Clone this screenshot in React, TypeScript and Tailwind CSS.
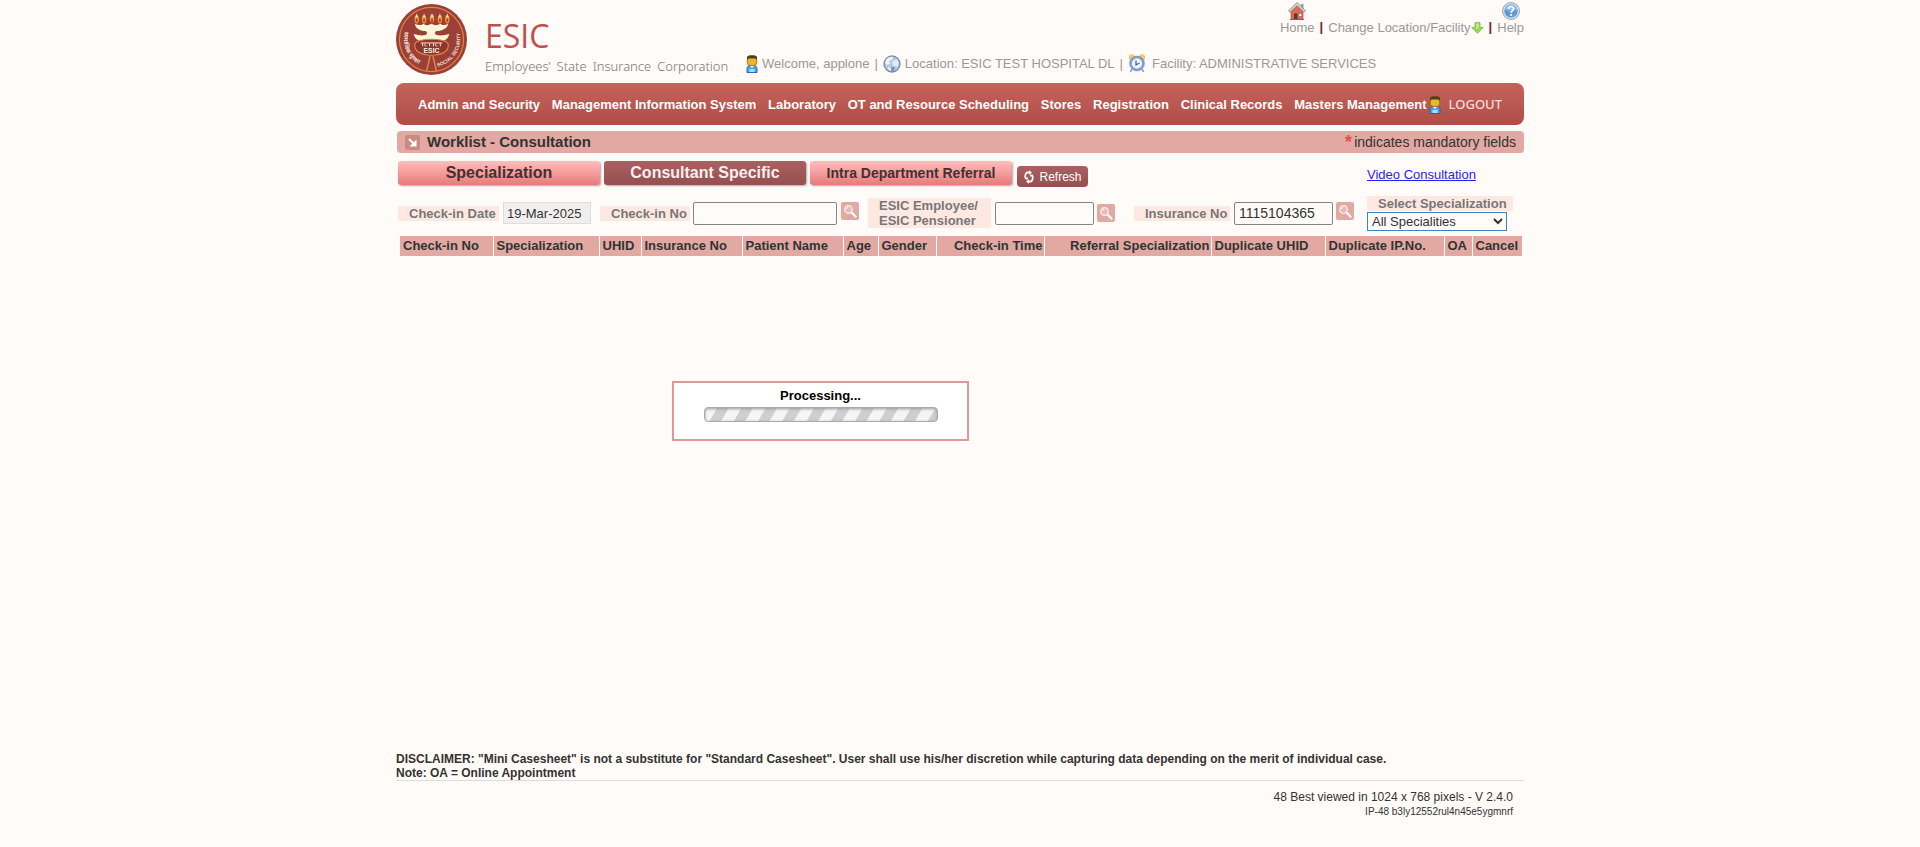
import React from "react";

const modules = [
  "Admin and Security",
  "Management Information System",
  "Laboratory",
  "OT and Resource Scheduling",
  "Stores",
  "Registration",
  "Clinical Records",
  "Masters Management",
];

const columns = [
  { label: "Check-in No", className: "w-[93px] text-left" },
  { label: "Specialization", className: "w-[106px] text-left" },
  { label: "UHID", className: "w-[42px] text-left" },
  { label: "Insurance No", className: "w-[101px] text-left" },
  { label: "Patient Name", className: "w-[101px] text-left" },
  { label: "Age", className: "w-[35px] text-left" },
  { label: "Gender", className: "w-[58px] text-left" },
  { label: "Check-in Time", className: "w-[108px] text-right" },
  { label: "Referral Specialization", className: "w-[167px] text-right" },
  { label: "Duplicate UHID", className: "w-[114px] text-left" },
  { label: "Duplicate IP.No.", className: "w-[119px] text-left" },
  { label: "OA", className: "w-[28px] text-left" },
  { label: "Cancel", className: "w-[50px] text-left" },
];

function Emblem() {
  return (
    <svg viewBox="0 0 72 72" className="size-[71px] shrink-0" role="img" aria-label="ESIC emblem">
      <defs>
        <path id="left-arc" d="M9 28 A28 28 0 0 0 29 63" />
        <path id="right-arc" d="M42 63.500 A29 29 0 0 0 62 22" />
      </defs>
      <circle cx="36" cy="36" r="36" fill="#9a4038" />
      <circle cx="36" cy="36" r="32.500" fill="none" stroke="#e0883c" strokeWidth="1.200" />
      {[21, 28.500, 36.500, 44.500, 52].map((x, i) => (
        <g key={x}>
          <ellipse cx={x} cy={i === 2 ? 14.500 : 15.500} rx="2.200" ry="4.200" fill="#f2a23a" />
          <path d={`M${x} 9.500l1.300 4h-2.600z`} fill="#f8e49a" />
          <ellipse cx={x} cy="16.500" rx="1" ry="2" fill="#c8342c" />
        </g>
      ))}
      <path d="M19 20c3 1.500 7 1.800 9 0 2 2 5 2 8 0 3 2 6 2 9 0 2 1.800 5 1.500 8 0-1 5-6 7-12 7.500-2 1-2 3 0 4 4 1 9 0 13-1-1 5-5 7.500-9 7.500H27c-4 0-8-2.500-9-7.500 4 1 8 2 12 1 2-1 2-3 0-4-6-.500-10-2.500-11-7.500z" fill="#fff6d8" />
      <path d="M19 41c1-7 33-7 34 0 .500 6-5 11-17 11s-17.500-5-17-11z" fill="#8d3630" stroke="#e0883c" strokeWidth="1.200" />
      <path d="M25 39.500h22" stroke="#f5ddc8" />
      <path d="M27 39.500v3.500M30 40c-2 1-1 3 1 2.500M34 39.500v3.500M38 39.500v3.500M41 40c-2 1-1 3 1 2.500M45 39.500v3.500" stroke="#f5ddc8" fill="none" />
      <text x="36" y="50" textAnchor="middle" fontFamily="Liberation Sans, sans-serif" fontSize="7" fontWeight="700" fill="#fbeedd">ESIC</text>
      <path d="M34.500 53L31 68M37.500 53L41 68" stroke="#e0883c" strokeWidth="1.500" fill="none" />
      <text fontFamily="Noto Sans Devanagari, Noto Sans, sans-serif" fontSize="6" fontWeight="700" fill="#f5ddc8">
        <textPath href="#left-arc">सामाजिक सुरक्षा</textPath>
      </text>
      <text fontFamily="Liberation Sans, sans-serif" fontSize="5" fontWeight="700" fill="#f5ddc8">
        <textPath href="#right-arc">SOCIAL SECURITY</textPath>
      </text>
    </svg>
  );
}

function HouseIcon() {
  return (
    <svg viewBox="0 0 18 18" className="size-[18px]" aria-hidden="true">
      <path d="M13 2h2.500v5H13z" fill="#9a9a9a" />
      <path d="M3 9l6-6 6 6v8.500H3z" fill="#dd6a50" stroke="#a8452f" strokeWidth=".6" />
      <path d="M9 .600L.500 8.800l1.600 1.500L9 3.800l6.900 6.500 1.600-1.500z" fill="#d3d3d3" stroke="#777" strokeWidth=".7" />
      <path d="M6 11.500h3.500v6H6z" fill="#5c3a32" />
      <path d="M10.800 11.500h3v3h-3z" fill="#fff" stroke="#8d4a3b" strokeWidth=".5" />
      <path d="M2 17.500h14" stroke="#6b6b6b" />
    </svg>
  );
}

function HelpIcon() {
  return (
    <svg viewBox="0 0 18 18" className="size-[18px]" aria-hidden="true">
      <circle cx="9" cy="9" r="8.400" fill="#e9eef3" stroke="#8c9bab" strokeWidth="1" />
      <circle cx="9" cy="9" r="6.800" fill="#5f9bd5" />
      <path d="M3 7a6.200 6.200 0 0 1 12 0c-3 2-9 2-12 0z" fill="#8fbde8" />
      <path d="M6.600 7c0-3.400 5-3.200 5-.3 0 1.900-2.500 1.900-2.500 4" fill="none" stroke="#fff" strokeWidth="1.700" />
      <circle cx="9.100" cy="13" r="1.100" fill="#fff" />
    </svg>
  );
}

function UserIcon() {
  return (
    <svg viewBox="0 0 12 18" className="h-[18px] w-3 shrink-0" aria-hidden="true">
      <path d="M1 17.500V14c0-2.500 1.500-4 5-4s5 1.500 5 4v3.500z" fill="#4aa3ea" stroke="#1d5fae" strokeWidth=".9" />
      <path d="M3.500 14h5v3h-5z" fill="#a9dcff" />
      <path d="M3.500 10.300h5L6 13z" fill="#fff" />
      <rect x="1.300" y="1.500" width="9.400" height="9" rx="3" fill="#e8b72c" stroke="#8c6410" strokeWidth=".8" />
      <path d="M1 5V2.500C1 .700 3 .300 6 .300s5 .4 5 2.200V5L9.500 3.600h-7z" fill="#54400f" />
    </svg>
  );
}

function GlobeIcon() {
  return (
    <svg viewBox="0 0 18 18" className="size-[18px] shrink-0" aria-hidden="true">
      <circle cx="9" cy="9" r="8" fill="#b4c8e0" stroke="#7d8aa0" strokeWidth="1.300" />
      <path d="M3 5c2-3 5-3.500 7-3l-1 3-3 1 1 3-3 1-2-2z" fill="#edf2f7" />
      <path d="M10 6l4-2 2 4-2 4-3-1-2-2z" fill="#e2eaf3" />
      <path d="M5 12l3 1v3l-3-2z" fill="#edf2f7" />
      <path d="M8 12h4l-1 4-3 .5z" fill="#6f9bd0" />
    </svg>
  );
}

function ClockIcon() {
  return (
    <svg viewBox="0 0 18 19" className="h-[19px] w-[18px] shrink-0" aria-hidden="true">
      <path d="M4 15l-1.500 3M14 15l1.500 3" stroke="#8b9bb0" strokeWidth="1.600" />
      <circle cx="4" cy="3.500" r="3.200" fill="#f3cb63" />
      <circle cx="14" cy="3.500" r="3.200" fill="#f3cb63" />
      <circle cx="9" cy="9.500" r="7.300" fill="#7ea8dc" stroke="#6485b5" strokeWidth=".8" />
      <circle cx="9" cy="9.500" r="5" fill="#f2f6fb" />
      <path d="M8 6.500v4.500l3.500-2" fill="none" stroke="#4d6180" strokeWidth="1.300" />
    </svg>
  );
}

function DownArrowIcon() {
  return (
    <svg viewBox="0 0 13 12" className="h-3 w-[13px]" aria-hidden="true">
      <path d="M4 .700h5v4.800h3.200L6.500 11.300.800 5.500H4z" fill="#9bd65a" stroke="#74b53a" strokeWidth=".8" />
      <path d="M5 1.500h3v5H5z" fill="#bfe98a" />
    </svg>
  );
}

function TitleArrowIcon() {
  return (
    <svg viewBox="0 0 15 15" className="size-[15px]" aria-hidden="true">
      <rect width="15" height="15" rx="2" fill="#c98a84" />
      <path d="M4 4l5 5" stroke="#fff" strokeWidth="2" />
      <path d="M11.500 4.500v7h-7z" fill="#fff" />
    </svg>
  );
}

function RefreshIcon() {
  return (
    <svg viewBox="0 0 12 14" className="h-3.5 w-3" fill="none" stroke="#fff" strokeWidth="1.800" aria-hidden="true">
      <path d="M5 8.500H3.200C1.800 8.500 1.800 3.500 4 2.500h3" />
      <path d="M7 5.500h1.800c1.400 0 1.400 5-.8 6H5" />
      <path d="M6 .300L9 2.500 6 4.700zM6 9.300l-3 2.200 3 2.200z" fill="#fff" stroke="none" />
    </svg>
  );
}

function SearchButton({ label }: { label: string }) {
  return (
    <button type="button" aria-label={label} className="size-[18px] shrink-0 cursor-pointer rounded-xs bg-[#e2a8a2]">
      <svg viewBox="0 0 18 18" className="size-full" fill="none" aria-hidden="true">
        <circle cx="7.500" cy="7.500" r="3.800" stroke="#fbeeec" strokeWidth="1.300" fill="#e9bbb6" />
        <path d="M5.500 7a2 2 0 0 1 1.800-1.700" stroke="#fff" />
        <path d="M10.500 10.500l4.700 4.700" stroke="#fff" strokeWidth="2.200" />
      </svg>
    </button>
  );
}

function Divider() {
  return <span className="mx-[5px] text-[13px] leading-4 font-bold text-[#7a2430]">|</span>;
}

const labelStyle = "bg-[#fde9e2] pl-[11px] text-[13px] leading-[15px] font-bold text-[#777]";
const inputStyle = "h-[23px] rounded-xs border border-[#858585] bg-transparent px-1 text-sm text-[#333]";
const tabBase = "flex h-6 w-[202px] cursor-pointer items-center justify-center rounded-[3px] font-bold shadow-[1px_1px_2px_#aaa]";
const tabLight = "bg-linear-to-b from-[#ffbdbd] to-[#e67a7a] text-[#443030]";
const tabDark = "bg-linear-to-b from-[#aa6060] to-[#955050] text-[#fbeeee]";

export default function App() {
  return (
    <div className="relative flex min-h-screen flex-col bg-[#fffbf9] px-4 font-['Liberation_Sans',Arial,sans-serif] text-[#333]">
      <div className="mx-auto flex w-full max-w-[1128px] grow flex-col">
        <header className="flex h-[83px] items-start">
          <div className="pt-1">
            <Emblem />
          </div>
          <div className="ml-[18px] w-[261px] pt-4 font-['Open_Sans',sans-serif]">
            <h1 className="text-[32px] leading-10 text-[#c0504d]">ESIC</h1>
            <p className="flex gap-1.5 font-['Noto_Sans',sans-serif] text-[13px] leading-5 font-light text-[#777]">
              <span>Employees’</span>
              <span>State</span>
              <span>Insurance</span>
              <span>Corporation</span>
            </p>
          </div>
          <div className="flex grow flex-col">
            <nav aria-label="Utility" className="flex items-end self-end pt-0.5 text-[13px] leading-[15px] text-[#999]">
              <a href="#home" className="flex flex-col items-center">
                <HouseIcon />
                Home
              </a>
              <Divider />
              <a href="#location" className="flex items-center">
                Change Location/Facility
                <DownArrowIcon />
              </a>
              <Divider />
              <a href="#help" className="flex flex-col items-center">
                <HelpIcon />
                Help
              </a>
            </nav>
            <p className="flex items-center pt-[19px] text-[13px] leading-[18px] whitespace-nowrap text-[#999]">
              <UserIcon />
              <span className="pl-1">Welcome, applone</span>
              <span className="px-[5px]">|</span>
              <GlobeIcon />
              <span className="pl-1">Location: ESIC TEST HOSPITAL DL</span>
              <span className="px-[5px]">|</span>
              <ClockIcon />
              <span className="pl-1.5">Facility: ADMINISTRATIVE SERVICES</span>
            </p>
          </div>
        </header>

        <nav
          aria-label="Modules"
          className="flex h-[42px] items-center rounded-lg bg-linear-to-b from-[#c4635c] to-[#b04d48] px-[22px] pt-px text-[13px] font-bold whitespace-nowrap text-white"
        >
          <ul className="flex grow justify-between">
            {modules.map((name) => (
              <li key={name}>
                <a href="#module">{name}</a>
              </li>
            ))}
          </ul>
          <a href="#logout" className="ml-0.5 flex items-center gap-2 font-['Noto_Sans',sans-serif] font-medium text-[#f6dcda]">
            <UserIcon />
            LOGOUT
          </a>
        </nav>

        <div className="mt-1.5 ml-px flex h-[22px] items-center rounded-sm bg-[#e2a8a2] pr-2 pl-2">
          <TitleArrowIcon />
          <h2 className="pl-[7px] text-[15px] font-bold">Worklist - Consultation</h2>
          <p className="ml-auto flex text-[14px] leading-[22px]">
            <span className="pr-0.5 text-lg leading-[22px] font-bold text-[#ef4a43]">*</span>
            indicates mandatory fields
          </p>
        </div>

        <div className="mt-2 ml-0.5 flex items-start">
          <button type="button" className={`${tabBase} ${tabLight} text-base`}>
            Specialization
          </button>
          <button type="button" className={`${tabBase} ${tabDark} ml-1 text-base`}>
            Consultant Specific
          </button>
          <button type="button" className={`${tabBase} ${tabLight} ml-1 text-[14px]`}>
            Intra Department Referral
          </button>
          <button
            type="button"
            className="mt-[5px] ml-[5px] flex h-[21px] w-[71px] cursor-pointer items-center justify-center gap-1 rounded-sm bg-linear-to-b from-[#aa6060] to-[#955050] text-xs text-white"
          >
            <RefreshIcon />
            Refresh
          </button>
          <div className="ml-auto w-[157px] pt-1.5">
            <a href="#video" className="block text-[13px] leading-4 text-[#2a1fe8] underline">
              Video Consultation
            </a>
          </div>
        </div>

        <form className="mt-2 ml-0.5 grid h-9 grid-cols-[202fr_268fr_266fr_233fr_157fr] items-center">
          <div className="flex items-center gap-1">
            <label htmlFor="date" className={`${labelStyle} w-[101px]`}>
              Check-in Date
            </label>
            <input id="date" readOnly value="19-Mar-2025" className="h-[22px] w-[88px] border border-[#ddd] bg-[#f1efee] px-[3px] text-[13px]" />
          </div>
          <div className="flex items-center">
            <label htmlFor="checkin" className={`${labelStyle} w-[90px]`}>
              Check-in No
            </label>
            <input id="checkin" className={`${inputStyle} ml-[3px] w-36`} />
            <span className="ml-1 flex self-start">
              <SearchButton label="Search by check-in number" />
            </span>
          </div>
          <div className="flex items-center">
            <label htmlFor="employee" className={`${labelStyle} w-[123px]`}>
              ESIC Employee/
              <br />
              ESIC Pensioner
            </label>
            <input id="employee" className={`${inputStyle} ml-1 w-[99px]`} />
            <span className="ml-[3px] flex">
              <SearchButton label="Search by employee or pensioner" />
            </span>
          </div>
          <div className="flex items-center">
            <label htmlFor="insurance" className={`${labelStyle} w-24`}>
              Insurance No
            </label>
            <input id="insurance" defaultValue="1115104365" className={`${inputStyle} ml-1 w-[99px]`} />
            <span className="ml-[3px] flex self-start">
              <SearchButton label="Search by insurance number" />
            </span>
          </div>
          <div className="flex flex-col items-start">
            <label htmlFor="speciality" className={`${labelStyle} w-[146px]`}>
              Select Specialization
            </label>
            <select id="speciality" className="mt-px h-[19px] w-[140px] border border-[#3a87bf] bg-transparent pr-1.5 text-[13px] leading-4">
              <option>All Specialities</option>
            </select>
          </div>
        </form>

        <table className="mt-[5px] ml-1 w-[calc(100%-6px)] table-fixed border-collapse text-[13px]">
          <thead>
            <tr className="h-5 bg-[#e2a8a2]">
              {columns.map((c) => (
                <th
                  key={c.label}
                  scope="col"
                  className={`${c.className} border-r border-[#fffbf9] pr-px pl-[3px] leading-5 font-bold whitespace-nowrap last:border-r-0`}
                >
                  {c.label}
                </th>
              ))}
            </tr>
          </thead>
        </table>

        <footer className="mt-auto pb-7 text-xs">
          <p className="border-b border-[#ddd] leading-[14px] font-bold">
            DISCLAIMER: "Mini Casesheet" is not a substitute for "Standard Casesheet". User shall use his/her discretion while capturing data depending on the
            merit of individual case.
            <br />
            Note: OA = Online Appointment
          </p>
          <p className="pt-2 pr-[11px] text-right leading-4">48 Best viewed in 1024 x 768 pixels - V 2.4.0</p>
          <p className="pr-[11px] text-right text-[10px] leading-[14px]">IP-48 b3ly12552rul4n45e5ygmnrf</p>
        </footer>
      </div>

      <div role="status" className="absolute top-[45%] left-[35%] flex h-[60px] w-[297px] flex-col items-center border-2 border-[#dd9a96] bg-white pt-[5px]">
        <span className="text-[13px] leading-4 font-bold text-black">Processing...</span>
        <div className="mt-[3px] h-[15px] w-[234px] rounded-sm border border-[#aaa] bg-[repeating-linear-gradient(120deg,#f5f5f5_0_10px,#cfcfcf_11px_20px,#f5f5f5_21px)] shadow-[inset_0_1px_3px_#999]" />
      </div>
    </div>
  );
}
